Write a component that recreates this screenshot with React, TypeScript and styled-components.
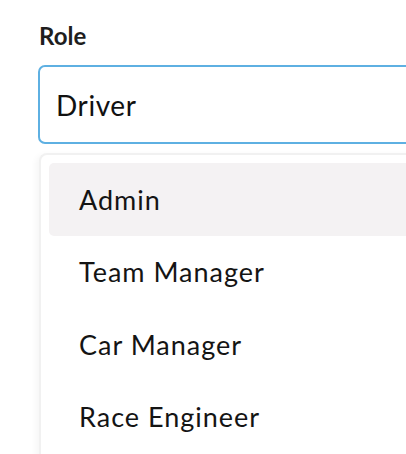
import React from "react";
import styled, { createGlobalStyle } from "styled-components";

const Global = createGlobalStyle`
  html, body {
    margin: 0;
    padding: 0;
    background: #ffffff;
    overflow: hidden;
  }
  body {
    font-family: Lato, "Open Sans", sans-serif;
    color: #141414;
  }
`;

const Page = styled.div`
  width: 406px;
  height: 454px;
  overflow: hidden;
  padding: 21px 0 0 38px;
  box-sizing: border-box;
`;

const Field = styled.div`
  display: flex;
  flex-direction: column;
  width: 420px;
`;

const Label = styled.label`
  font-family: Lato, sans-serif;
  font-weight: 700;
  font-size: 24px;
  line-height: 30px;
  color: #1e1e1e;
  margin-left: 1px;
  margin-bottom: 14px;
`;

const Select = styled.div`
  height: 79px;
  box-sizing: border-box;
  border: 2px solid #5eb0e2;
  border-radius: 7px;
  display: flex;
  align-items: center;
  padding-left: 16px;
  font-size: 28px;
  letter-spacing: 0.6px;
  color: #111;
`;

const Menu = styled.ul`
  list-style: none;
  margin: 9px 0 0 1px;
  padding: 8px 8px;
  border: 2px solid #f1f1f1;
  border-right: none;
  border-radius: 8px 0 0 8px;
  box-shadow: -3px 2px 6px rgba(0, 0, 0, 0.04);
  background: #fff;
`;

const Item = styled.li<{ $active?: boolean }>`
  height: 72.5px;
  display: flex;
  align-items: center;
  padding-left: 30px;
  border-radius: 5px;
  font-size: 27px;
  letter-spacing: 1px;
  color: #141414;
  background: ${(p) => (p.$active ? "#f4f2f3" : "transparent")};
`;

const roles = ["Admin", "Team Manager", "Car Manager", "Race Engineer"];

export default function App() {
  return (
    <>
      <Global />
      <Page>
        <Field>
          <Label>Role</Label>
          <Select>Driver</Select>
          <Menu>
            {roles.map((r, i) => (
              <Item key={r} $active={i === 0}>
                {r}
              </Item>
            ))}
          </Menu>
        </Field>
      </Page>
    </>
  );
}
